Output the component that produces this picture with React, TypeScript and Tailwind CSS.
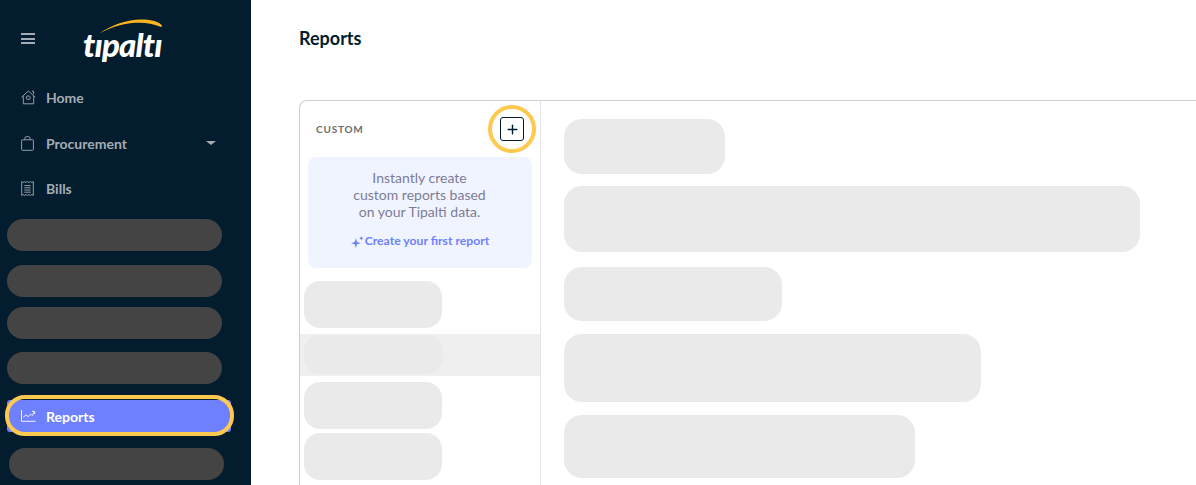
import { Plus } from "lucide-react";

const font = { fontFamily: "Lato, 'Noto Sans', sans-serif" };

function HomeIcon() {
    return (
        <svg width="15" height="15" viewBox="0 0 15 15" fill="none" stroke="currentColor" strokeWidth="0.9">
            <path d="M0.6 7.2 7.4 1l6.8 6.2M2.3 6.2v7.6h10.4V6.2" strokeLinejoin="round" />
            <path d="M11 1.2h1.6v3" />
            <rect x="5.600" y="6" width="3.400" height="3.400" rx="0.8" />
        </svg>
    );
}

function BagIcon() {
    return (
        <svg width="13" height="15" viewBox="0 0 13 15" fill="none" stroke="currentColor" strokeWidth="0.9">
            <path d="M1.200 3.800h10.600a.6.6 0 0 1 .6.6v9a.9.9 0 0 1-.9.9H1.500a.9.9 0 0 1-.9-.9v-9a.6.6 0 0 1 .6-.6z" />
            <path d="M3.800 3.800V2.500A1.900 1.900 0 0 1 5.700.6h1.600a1.900 1.900 0 0 1 1.900 1.900v1.300" />
        </svg>
    );
}

function BillIcon() {
    return (
        <svg width="13" height="15" viewBox="0 0 13 15" fill="none" stroke="currentColor" strokeWidth="0.9">
            <path d="M.7.6l1.400.9L3.500.6l1.500.9L6.500.6 8 1.500 9.500.6l1.400.9 1.400-.9v13.800l-1.400-.9-1.400.9L8 13.500l-1.500.9-1.500-.9-1.500.9-1.400-.9-1.400.9z" strokeLinejoin="round" />
            <path d="M3.300 4.600h6.400M3.300 6.800h6.400M3.300 9h6.400M3.300 11.200h6.400" />
        </svg>
    );
}

function ReportsIcon() {
    return (
        <svg width="15" height="12" viewBox="0 0 15 12" fill="none" stroke="currentColor" strokeWidth="0.9">
            <path d="M.5 0v11.300h14" />
            <path d="M2.200 7.600 4.800 4.800l2.400 1.800 2.600-2.400 1.400 1.400 2.200-3.600" />
            <path d="M11 1.400h2.600V4" />
        </svg>
    );
}

function Logo() {
    return (
        <div className="relative ml-[48px] h-[40px] w-[84px]" aria-label="tipalti">
            <svg className="absolute left-[16px] top-[1px]" width="64" height="15" viewBox="0 0 64 15">
                <path d="M0 14.500C13 6 28 .5 42 .5c9 0 17 1.500 20.500 5.500 1 1.300.3 2.500-1 1.700C53 4 45 3.300 36 3.800 23 4.500 11 9 0 14.500z" fill="#fcb41f" />
            </svg>
            <span className="absolute left-0 top-[8px] text-[33px] leading-[36px] font-black italic tracking-[-0.8px] text-white" style={font}>
                tıpaltı
            </span>
        </div>
    );
}

function NavItem({ icon, label, caret }: { icon: React.ReactNode; label: string; caret?: boolean }) {
    return (
        <div className="flex h-[24px] items-center pl-[21px] text-[#a4adb5]">
            <span className="flex w-[25px] items-center">{icon}</span>
            <span className="text-[14px] font-bold">{label}</span>
            {caret && <span className="ml-auto mr-[35px] h-0 w-0 border-x-[5px] border-t-[4px] border-x-transparent border-t-[#a4adb5]" />}
        </div>
    );
}

function SidePill({ className }: { className: string }) {
    return <div className={`h-[32px] w-[215px] rounded-[16px] bg-[#444444] ${className}`} />;
}

function Sidebar() {
    return (
        <aside className="flex h-[485px] w-[251px] shrink-0 flex-col overflow-hidden bg-[#031c2e]">
            <div className="mt-[18px] flex items-start">
                <div className="ml-[21px] mt-[15px] flex w-[14px] flex-col gap-[2.500px]">
                    <span className="h-[2px] bg-[#a4adb5]" />
                    <span className="h-[2px] bg-[#a4adb5]" />
                    <span className="h-[2px] bg-[#a4adb5]" />
                </div>
                <Logo />
            </div>
            <div className="mt-[27px] flex flex-col gap-[22px]">
                <NavItem icon={<HomeIcon />} label="Home" />
                <NavItem icon={<BagIcon />} label="Procurement" caret />
            </div>
            <div className="mt-[21px]">
                <NavItem icon={<BillIcon />} label="Bills" />
            </div>
            <SidePill className="ml-[7px] mt-[19px]" />
            <SidePill className="ml-[7px] mt-[14px]" />
            <SidePill className="ml-[7px] mt-[10px]" />
            <SidePill className="ml-[7px] mt-[13px]" />
            <div className="relative ml-[7px] mt-[16px] flex h-[32px] w-[224px] items-center rounded-[3px] bg-[#6f80ff] pl-[14px] text-white">
                <span className="flex w-[25px] items-center"><ReportsIcon /></span>
                <span className="text-[14px] font-bold">Reports</span>
                <span className="absolute -bottom-[4px] -left-[2px] -right-[3px] -top-[5px] rounded-[20px] border-4 border-[#fdc94f]" />
            </div>
            <SidePill className="ml-[9px] mt-[16px]" />
        </aside>
    );
}

function CustomColumn() {
    return (
        <div className="w-[241px] shrink-0 border-r border-[#e3e3e3]">
            <div className="flex h-[56px] items-start justify-between pl-[16px]">
                <span className="mt-[22px] text-[10px] leading-[12px] font-bold tracking-[0.8px] text-[#6d6d6d]">CUSTOM</span>
                <div className="relative mr-[16px] mt-[16px] flex h-[24px] w-[24px] items-center justify-center rounded-[3px] border border-[#031c2e] text-[#031c2e]">
                    <Plus size={15} strokeWidth={2.2} />
                    <span className="absolute -inset-[13px] rounded-full border-4 border-[#fdc94f]" />
                </div>
            </div>
            <div className="mx-[8px] flex h-[111px] flex-col items-center rounded-[8px] bg-[#f0f4ff] pt-[12px]">
                <p className="-ml-[1px] text-center text-[14px] leading-[17px] text-[#7d7c99]">
                    Instantly create<br />custom reports based<br />on your Tipalti data.
                </p>
                <div className="mt-[13px] flex items-center gap-[1px] text-[12.200px] leading-[16px] font-bold text-[#6f80ff]">
                    <svg width="13" height="13" viewBox="0 0 12 12" fill="currentColor">
                        <path d="M4.500 3 5.600 6.400 9 7.500 5.600 8.600 4.500 12 3.400 8.600 0 7.500 3.400 6.400z" />
                        <path d="M9.500 1 10.100 2.400 11.500 3 10.100 3.600 9.500 5 8.900 3.600 7.500 3 8.900 2.400z" />
                    </svg>
                    Create your first report
                </div>
            </div>
            <div className="ml-[4px] mt-[13px] h-[47px] w-[138px] rounded-[16px] bg-[#eaeaea]" />
            <div className="mt-[6px] h-[42px] bg-[#efefef] pl-[4px] pt-[1px]">
                <div className="h-[39px] w-[139px] rounded-[16px] bg-[#eaeaea]" />
            </div>
            <div className="ml-[4px] mt-[6px] h-[47px] w-[138px] rounded-[16px] bg-[#eaeaea]" />
            <div className="ml-[4px] mt-[4px] h-[47px] w-[138px] rounded-[16px] bg-[#eaeaea]" />
        </div>
    );
}

function ContentColumn() {
    return (
        <div className="flex flex-col pl-[23px] pt-[18px]">
            <div className="h-[55px] w-[161px] rounded-[18px] bg-[#eaeaea]" />
            <div className="mt-[12px] h-[66px] w-[576px] rounded-[18px] bg-[#eaeaea]" />
            <div className="mt-[15px] h-[54px] w-[218px] rounded-[18px] bg-[#eaeaea]" />
            <div className="mt-[13px] h-[68px] w-[417px] rounded-[18px] bg-[#eaeaea]" />
            <div className="mt-[13px] h-[63px] w-[351px] rounded-[18px] bg-[#eaeaea]" />
        </div>
    );
}

export default function App() {
    return (
        <div className="flex h-[485px] w-[1196px] overflow-hidden bg-white" style={font}>
            <Sidebar />
            <main className="flex-1 pl-[48px]">
                <h1 className="mt-[27px] text-[18px] leading-[22px] font-bold text-[#031c2e]">Reports</h1>
                <div className="mt-[51px] flex h-[400px] rounded-tl-[8px] border-l border-t border-[#cfcfcf]">
                    <CustomColumn />
                    <ContentColumn />
                </div>
            </main>
        </div>
    );
}
